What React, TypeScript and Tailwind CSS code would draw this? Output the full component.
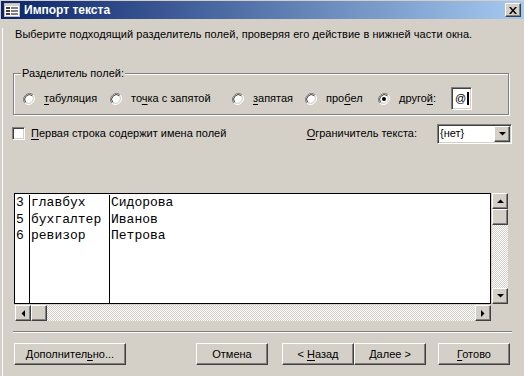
import React from "react";

const raised =
  "border border-t-white border-l-white border-b-[#404040] border-r-[#404040] shadow-[inset_-1px_-1px_0_#808080] bg-[#d4d0c8]";
const sunken =
  "border border-t-[#808080] border-l-[#808080] border-b-white border-r-white shadow-[inset_1px_1px_0_#404040,inset_-1px_-1px_0_#d4d0c8]";

function Radio({ checked }: { checked?: boolean }) {
  return (
    <svg width="12" height="12" viewBox="0 0 12 12" className="shrink-0">
      <path d="M10.2 1.8 A6 6 0 0 0 1.8 10.2" fill="none" stroke="#808080" strokeWidth="1" />
      <path d="M1.8 10.2 A6 6 0 0 0 10.2 1.8" fill="none" stroke="#ffffff" strokeWidth="1" />
      <circle cx="6" cy="6" r="4.6" fill="#fff" />
      <path d="M9.3 2.7 A4.7 4.7 0 0 0 2.7 9.3" fill="none" stroke="#404040" strokeWidth="1" />
      <path d="M2.7 9.3 A4.7 4.7 0 0 0 9.3 2.7" fill="none" stroke="#d4d0c8" strokeWidth="1" />
      {checked && <circle cx="6" cy="6" r="2" fill="#000" />}
    </svg>
  );
}

function U({ children }: { children: React.ReactNode }) {
  return <span className="underline underline-offset-[2px]">{children}</span>;
}

function RadioItem({
  w,
  checked,
  children,
}: {
  w: string;
  checked?: boolean;
  children: React.ReactNode;
}) {
  return (
    <div className={`flex items-center ${w}`}>
      <Radio checked={checked} />
      <span className="ml-[9px] whitespace-nowrap">{children}</span>
    </div>
  );
}

function Arrow({ dir }: { dir: "up" | "down" | "left" | "right" }) {
  const pts: Record<string, string> = {
    up: "0,4 7,4 3.5,0.5",
    down: "0,0 7,0 3.5,3.5",
    left: "4,0 4,7 0.5,3.5",
    right: "0,0 0,7 3.5,3.5",
  };
  const vertical = dir === "up" || dir === "down";
  return (
    <svg width={vertical ? 7 : 4} height={vertical ? 4 : 7} viewBox={vertical ? "0 0 7 4" : "0 0 4 7"}>
      <polygon points={pts[dir]} fill="#000" />
    </svg>
  );
}

function SBtn({ dir }: { dir: "up" | "down" | "left" | "right" }) {
  return (
    <div className={`w-[16px] h-[16px] shrink-0 flex items-center justify-center ${raised}`}>
      <Arrow dir={dir} />
    </div>
  );
}

const track =
  "bg-[repeating-conic-gradient(#ffffff_0_25%,#d4d0c8_0_50%)] bg-[length:2px_2px]";

const rows = [
  ["3", "главбух", "Сидорова"],
  ["5", "бухгалтер", "Иванов"],
  ["6", "ревизор", "Петрова"],
];

function Btn({ w, children, cls = "" }: { w: string; children: React.ReactNode; cls?: string }) {
  return (
    <div className={`h-[22px] ${w} flex items-center justify-center ${raised} ${cls}`}>
      <span className="whitespace-nowrap">{children}</span>
    </div>
  );
}

export default function App() {
  return (
    <div className="w-[524px] h-[376px] overflow-hidden bg-[#d4d0c8] pt-px font-['Liberation_Sans',Arial,sans-serif] text-[11px] leading-[13px] text-black">
      {/* Title bar */}
      <div className="ml-px h-[18px] flex items-center bg-[linear-gradient(to_right,#0a246a,#a6caf0)]">
        <svg width="16" height="14" viewBox="0 0 16 14" className="ml-[3px] shrink-0">
          <rect x="0.5" y="0.5" width="15" height="13" fill="#ffffff" stroke="#c0c0c0" />
          <rect x="1" y="1" width="14" height="2" fill="#d4d0c8" />
          <rect x="2" y="4" width="4" height="2" fill="#404040" />
          <rect x="7" y="4" width="7" height="2" fill="#808080" />
          <rect x="2" y="7" width="4" height="2" fill="#404040" />
          <rect x="7" y="7" width="7" height="2" fill="#808080" />
          <rect x="2" y="10" width="4" height="2" fill="#404040" />
          <rect x="7" y="10" width="7" height="2" fill="#808080" />
        </svg>
        <span className="ml-[4px] text-white font-bold text-[12px] leading-[14px]">Импорт текста</span>
        <div className={`ml-auto mr-[3px] w-[16px] h-[14px] flex items-center justify-center ${raised}`}>
          <svg width="8" height="7" viewBox="0 0 8 7">
            <path d="M0 0h2l2 2.5L6 0h2L5 3.5 8 7H6L4 4.5 2 7H0l3-3.5z" fill="#000" />
          </svg>
        </div>
      </div>

      {/* Body */}
      <div className="ml-[2px] border-l border-white h-[357px]">
        <div className="ml-[12px] mt-[9px] whitespace-nowrap tracking-[0.06px]">
          Выберите подходящий разделитель полей, проверяя его действие в нижней части окна.
        </div>

        {/* Group box */}
        <div className="relative ml-[10px] mt-[32px] w-[496px] h-[42px] border border-[#808080] shadow-[inset_1px_1px_0_#ffffff,1px_1px_0_#ffffff]">
          <span className="absolute left-[7px] -top-[7px] px-[1px] bg-[#d4d0c8] whitespace-nowrap">
            Разделитель полей:
          </span>
          <div className="flex items-center pl-[9px] pt-[13px]">
            <RadioItem w="w-[87px]">
              <U>т</U>абуляция
            </RadioItem>
            <RadioItem w="w-[122px]">
              то<U>ч</U>ка с запятой
            </RadioItem>
            <RadioItem w="w-[73px]">
              <U>з</U>апятая
            </RadioItem>
            <RadioItem w="w-[73px]">
              про<U>б</U>ел
            </RadioItem>
            <RadioItem w="w-[73px]" checked>
              друго<U>й</U>:
            </RadioItem>
            <div className={`w-[21px] h-[23px] bg-white flex items-start pt-[4px] pl-[3px] ${sunken}`}>
              <span>@</span>
              <span className="ml-[1px] w-[2px] h-[13px] bg-black" />
            </div>
          </div>
        </div>

        {/* Checkbox + combo row */}
        <div className="mt-[8px] flex items-center h-[21px]">
          <div className={`ml-[9px] w-[13px] h-[13px] bg-white ${sunken}`} />
          <span className="ml-[6px] whitespace-nowrap">
            <U>П</U>ервая строка содержит имена полей
          </span>
          <span className="ml-auto whitespace-nowrap">
            <U>О</U>граничитель текста:
          </span>
          <div className={`ml-[20px] mr-[12px] w-[75px] h-[20px] bg-white flex items-center ${sunken}`}>
            <span className="ml-[2px]">{"{нет}"}</span>
            <div className={`ml-auto mr-[1px] w-[16px] h-[16px] flex items-center justify-center ${raised}`}>
              <Arrow dir="down" />
            </div>
          </div>
        </div>

        {/* Grid */}
        <div className="mt-[49px] ml-[11px] flex">
          <div className="w-[477px] flex flex-col">
            <div className="h-[111px] bg-white border border-black flex font-['Liberation_Mono','Courier_New',monospace] text-[13px] leading-[16.5px] pt-px">
              <div className="w-[15px] border-r border-black">
                {rows.map((r) => (
                  <div key={r[0]} className="pl-px">{r[0]}</div>
                ))}
              </div>
              <div className="w-[80px] border-r border-black">
                {rows.map((r) => (
                  <div key={r[0]} className="pl-px whitespace-nowrap">{r[1]}</div>
                ))}
              </div>
              <div className="flex-1">
                {rows.map((r) => (
                  <div key={r[0]} className="pl-px whitespace-nowrap">{r[2]}</div>
                ))}
              </div>
            </div>
            <div className="mt-px ml-px h-[16px] flex">
              <SBtn dir="left" />
              <div className={`w-[16px] h-[16px] ${raised}`} />
              <div className={`flex-1 ${track}`} />
              <SBtn dir="right" />
            </div>
          </div>
          <div className="ml-[1px] w-[16px] h-[111px] flex flex-col">
            <SBtn dir="up" />
            <div className={`w-[16px] h-[16px] ${raised}`} />
            <div className={`flex-1 ${track}`} />
            <SBtn dir="down" />
          </div>
        </div>

        {/* Separator */}
        <div className="mt-[10px] ml-[10px] w-[499px] border-t border-[#808080] border-b border-b-white" />

        {/* Buttons */}
        <div className="mt-[10px] flex">
          <Btn w="w-[112px]" cls="ml-[11px]">
            Дополнител<U>ь</U>но...
          </Btn>
          <Btn w="w-[72px]" cls="ml-[70px]">
            Отмена
          </Btn>
          <Btn w="w-[72px]" cls="ml-[14px]">
            &lt; <U>Н</U>азад
          </Btn>
          <Btn w="w-[72px]">
            <U>Д</U>алее &gt;
          </Btn>
          <Btn w="w-[72px]" cls="ml-[12px]">
            <U>Г</U>отово
          </Btn>
        </div>
      </div>
    </div>
  );
}
